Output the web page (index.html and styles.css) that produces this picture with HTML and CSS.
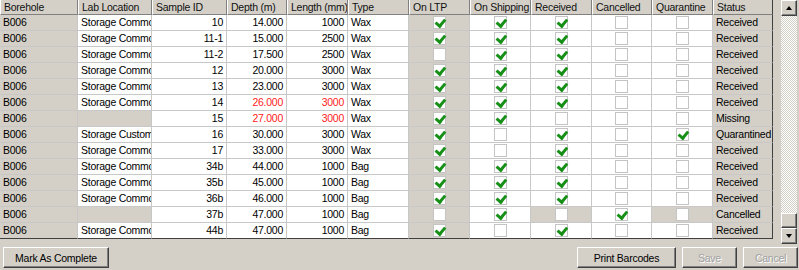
FILE: index.html
```html
<!DOCTYPE html>
<html>
    <head>
        <link rel="stylesheet" href="styles.css">
    </head>
    <body>
        <div class="window">
            <div class="main">
                <div class="grid">
                    <div class="row head">
                        <div class="cell">Borehole</div>
                        <div class="cell">Lab Location</div>
                        <div class="cell">Sample ID</div>
                        <div class="cell">Depth (m)</div>
                        <div class="cell">Length (mm)</div>
                        <div class="cell">Type</div>
                        <div class="cell">On LTP</div>
                        <div class="cell">On Shipping</div>
                        <div class="cell">Received</div>
                        <div class="cell">Cancelled</div>
                        <div class="cell">Quarantine</div>
                        <div class="cell">Status</div>
                    </div>
                    <div class="row">
                        <div class="cell">B006</div>
                        <div class="cell">Storage Common</div>
                        <div class="cell">10</div>
                        <div class="cell">14.000</div>
                        <div class="cell">1000</div>
                        <div class="cell">Wax</div>
                        <div class="cell chk"><span class="cb on"></span></div>
                        <div class="cell chk"><span class="cb on"></span></div>
                        <div class="cell chk"><span class="cb on"></span></div>
                        <div class="cell chk"><span class="cb"></span></div>
                        <div class="cell chk"><span class="cb"></span></div>
                        <div class="cell">Received</div>
                    </div>
                    <div class="row">
                        <div class="cell">B006</div>
                        <div class="cell">Storage Common</div>
                        <div class="cell">11-1</div>
                        <div class="cell">15.000</div>
                        <div class="cell">2500</div>
                        <div class="cell">Wax</div>
                        <div class="cell chk"><span class="cb on"></span></div>
                        <div class="cell chk"><span class="cb on"></span></div>
                        <div class="cell chk"><span class="cb on"></span></div>
                        <div class="cell chk"><span class="cb"></span></div>
                        <div class="cell chk"><span class="cb"></span></div>
                        <div class="cell">Received</div>
                    </div>
                    <div class="row">
                        <div class="cell">B006</div>
                        <div class="cell">Storage Common</div>
                        <div class="cell">11-2</div>
                        <div class="cell">17.500</div>
                        <div class="cell">2500</div>
                        <div class="cell">Wax</div>
                        <div class="cell chk"><span class="cb"></span></div>
                        <div class="cell chk"><span class="cb on"></span></div>
                        <div class="cell chk"><span class="cb on"></span></div>
                        <div class="cell chk"><span class="cb"></span></div>
                        <div class="cell chk"><span class="cb"></span></div>
                        <div class="cell">Received</div>
                    </div>
                    <div class="row">
                        <div class="cell">B006</div>
                        <div class="cell">Storage Common</div>
                        <div class="cell">12</div>
                        <div class="cell">20.000</div>
                        <div class="cell">3000</div>
                        <div class="cell">Wax</div>
                        <div class="cell chk"><span class="cb on"></span></div>
                        <div class="cell chk"><span class="cb on"></span></div>
                        <div class="cell chk"><span class="cb on"></span></div>
                        <div class="cell chk"><span class="cb"></span></div>
                        <div class="cell chk"><span class="cb"></span></div>
                        <div class="cell">Received</div>
                    </div>
                    <div class="row">
                        <div class="cell">B006</div>
                        <div class="cell">Storage Common</div>
                        <div class="cell">13</div>
                        <div class="cell">23.000</div>
                        <div class="cell">3000</div>
                        <div class="cell">Wax</div>
                        <div class="cell chk"><span class="cb on"></span></div>
                        <div class="cell chk"><span class="cb on"></span></div>
                        <div class="cell chk"><span class="cb on"></span></div>
                        <div class="cell chk"><span class="cb"></span></div>
                        <div class="cell chk"><span class="cb"></span></div>
                        <div class="cell">Received</div>
                    </div>
                    <div class="row">
                        <div class="cell">B006</div>
                        <div class="cell">Storage Common</div>
                        <div class="cell">14</div>
                        <div class="cell red">26.000</div>
                        <div class="cell red">3000</div>
                        <div class="cell">Wax</div>
                        <div class="cell chk"><span class="cb on"></span></div>
                        <div class="cell chk"><span class="cb on"></span></div>
                        <div class="cell chk"><span class="cb on"></span></div>
                        <div class="cell chk"><span class="cb"></span></div>
                        <div class="cell chk"><span class="cb"></span></div>
                        <div class="cell">Received</div>
                    </div>
                    <div class="row">
                        <div class="cell">B006</div>
                        <div class="cell grey"></div>
                        <div class="cell">15</div>
                        <div class="cell red">27.000</div>
                        <div class="cell red">3000</div>
                        <div class="cell">Wax</div>
                        <div class="cell chk"><span class="cb on"></span></div>
                        <div class="cell chk"><span class="cb on"></span></div>
                        <div class="cell chk"><span class="cb"></span></div>
                        <div class="cell chk"><span class="cb"></span></div>
                        <div class="cell chk"><span class="cb"></span></div>
                        <div class="cell">Missing</div>
                    </div>
                    <div class="row">
                        <div class="cell">B006</div>
                        <div class="cell">Storage Custom</div>
                        <div class="cell">16</div>
                        <div class="cell">30.000</div>
                        <div class="cell">3000</div>
                        <div class="cell">Wax</div>
                        <div class="cell chk"><span class="cb on"></span></div>
                        <div class="cell chk"><span class="cb"></span></div>
                        <div class="cell chk"><span class="cb on"></span></div>
                        <div class="cell chk"><span class="cb"></span></div>
                        <div class="cell chk"><span class="cb on"></span></div>
                        <div class="cell">Quarantined</div>
                    </div>
                    <div class="row">
                        <div class="cell">B006</div>
                        <div class="cell">Storage Common</div>
                        <div class="cell">17</div>
                        <div class="cell">33.000</div>
                        <div class="cell">3000</div>
                        <div class="cell">Wax</div>
                        <div class="cell chk"><span class="cb on"></span></div>
                        <div class="cell chk"><span class="cb"></span></div>
                        <div class="cell chk"><span class="cb on"></span></div>
                        <div class="cell chk"><span class="cb"></span></div>
                        <div class="cell chk"><span class="cb"></span></div>
                        <div class="cell">Received</div>
                    </div>
                    <div class="row">
                        <div class="cell">B006</div>
                        <div class="cell">Storage Common</div>
                        <div class="cell">34b</div>
                        <div class="cell">44.000</div>
                        <div class="cell">1000</div>
                        <div class="cell">Bag</div>
                        <div class="cell chk"><span class="cb on"></span></div>
                        <div class="cell chk"><span class="cb on"></span></div>
                        <div class="cell chk"><span class="cb on"></span></div>
                        <div class="cell chk"><span class="cb"></span></div>
                        <div class="cell chk"><span class="cb"></span></div>
                        <div class="cell">Received</div>
                    </div>
                    <div class="row">
                        <div class="cell">B006</div>
                        <div class="cell">Storage Common</div>
                        <div class="cell">35b</div>
                        <div class="cell">45.000</div>
                        <div class="cell">1000</div>
                        <div class="cell">Bag</div>
                        <div class="cell chk"><span class="cb on"></span></div>
                        <div class="cell chk"><span class="cb on"></span></div>
                        <div class="cell chk"><span class="cb on"></span></div>
                        <div class="cell chk"><span class="cb"></span></div>
                        <div class="cell chk"><span class="cb"></span></div>
                        <div class="cell">Received</div>
                    </div>
                    <div class="row">
                        <div class="cell">B006</div>
                        <div class="cell">Storage Common</div>
                        <div class="cell">36b</div>
                        <div class="cell">46.000</div>
                        <div class="cell">1000</div>
                        <div class="cell">Bag</div>
                        <div class="cell chk"><span class="cb on"></span></div>
                        <div class="cell chk"><span class="cb on"></span></div>
                        <div class="cell chk"><span class="cb on"></span></div>
                        <div class="cell chk"><span class="cb"></span></div>
                        <div class="cell chk"><span class="cb"></span></div>
                        <div class="cell">Received</div>
                    </div>
                    <div class="row">
                        <div class="cell">B006</div>
                        <div class="cell grey"></div>
                        <div class="cell">37b</div>
                        <div class="cell">47.000</div>
                        <div class="cell">1000</div>
                        <div class="cell">Bag</div>
                        <div class="cell chk"><span class="cb"></span></div>
                        <div class="cell chk"><span class="cb on"></span></div>
                        <div class="cell chk grey"><span class="cb"></span></div>
                        <div class="cell chk"><span class="cb on"></span></div>
                        <div class="cell chk grey"><span class="cb"></span></div>
                        <div class="cell">Cancelled</div>
                    </div>
                    <div class="row">
                        <div class="cell">B006</div>
                        <div class="cell">Storage Common</div>
                        <div class="cell">44b</div>
                        <div class="cell">47.000</div>
                        <div class="cell">1000</div>
                        <div class="cell">Bag</div>
                        <div class="cell chk"><span class="cb on"></span></div>
                        <div class="cell chk"><span class="cb"></span></div>
                        <div class="cell chk"><span class="cb on"></span></div>
                        <div class="cell chk"><span class="cb"></span></div>
                        <div class="cell chk"><span class="cb"></span></div>
                        <div class="cell">Received</div>
                    </div>
                </div>
                <div class="scrollbar">
                    <div class="sb-btn"><span class="arrow up"></span></div>
                    <div class="sb-track"></div>
                    <div class="sb-btn thumb"></div>
                    <div class="sb-btn"><span class="arrow down"></span></div>
                </div>
            </div>
            <div class="actions">
                <button class="btn wide">Mark As Complete</button>
                <div class="actions-right">
                    <button class="btn print">Print Barcodes</button>
                    <button class="btn small" disabled>Save</button>
                    <button class="btn small" disabled>Cancel</button>
                </div>
            </div>
        </div>
    </body>
</html>
```

FILE: styles.css
```css
body {
    margin: 0;
    background-color: #d4d0c8;
    font-family: "Liberation Sans", Arial, sans-serif;
    font-size: 10.5px;
    letter-spacing: -0.25px;
    color: #000;
}
.window {
    width: 799px;
    height: 270px;
}
.main {
    display: flex;
    height: 244px;
}
.grid {
    width: 773px;
}
.row {
    display: grid;
    grid-template-columns: 78px 74px 75px 60px 61px 61px 61px 61px 61px 60px 61px 60px;
    height: 16px;
}
.cell {
    box-sizing: border-box;
    border-right: 1px solid #c8c8c8;
    border-bottom: 1px solid #c8c8c8;
    padding: 0 3px;
    line-height: 15px;
    white-space: nowrap;
    overflow: hidden;
    background-color: #fff;
}
.row .cell:nth-child(1),
.row .cell:nth-child(7),
.row .cell:nth-child(12),
.row .cell.grey {
    background-color: #d4d0c8;
}
.row .cell:nth-child(3),
.row .cell:nth-child(4),
.row .cell:nth-child(5) {
    text-align: right;
}
.row .cell:last-child {
    border-right-color: #404040;
}
.row:last-child .cell {
    border-bottom-color: #404040;
}
.head {
    height: 15px;
}
.head .cell {
    background-color: #d4d0c8;
    border-left: 1px solid #fff;
    border-right-color: #808080;
    border-bottom-color: #808080;
    line-height: 14px;
    color: #111;
    text-align: left !important;
}
.cell.red {
    color: #f22;
}
.cell.chk {
    display: flex;
    align-items: center;
    justify-content: center;
    padding: 0;
}
.cb {
    position: relative;
    width: 13px;
    height: 13px;
    box-sizing: border-box;
    border: 1px solid #c4c4c4;
    background-color: #fff;
}
.cb.on::after {
    content: "";
    position: absolute;
    left: 3px;
    top: -0.5px;
    width: 3.5px;
    height: 7px;
    border: solid #168f16;
    border-width: 0 3px 3px 0;
    transform: rotate(40deg);
}

.scrollbar {
    display: flex;
    flex-direction: column;
    width: 16px;
    height: 244px;
    margin-left: 8px;
}
.sb-track {
    flex: 1;
    background: repeating-conic-gradient(#d4d0c8 0 25%, #fff 0 50%) 0 0 / 2px 2px;
}
.sb-btn {
    box-sizing: border-box;
    height: 16px;
    background-color: #d4d0c8;
    border: 1px solid;
    border-color: #fff #404040 #404040 #fff;
    box-shadow: inset -1px -1px #808080;
    display: flex;
    align-items: center;
    justify-content: center;
}
.sb-btn.thumb {
    height: 15px;
}
.arrow {
    width: 0;
    height: 0;
    border-left: 3.5px solid transparent;
    border-right: 3.5px solid transparent;
}
.arrow.up {
    border-bottom: 4px solid #000;
}
.arrow.down {
    border-top: 4px solid #000;
}

.actions {
    display: flex;
    justify-content: space-between;
    margin-top: 3px;
    padding: 0 1px 0 3px;
}
.actions-right {
    display: flex;
    gap: 6px;
}
.btn {
    box-sizing: border-box;
    height: 21px;
    padding: 0;
    font-family: "Liberation Sans", Arial, sans-serif;
    font-size: 10.5px;
    letter-spacing: -0.25px;
    color: #000;
    background-color: #d4d0c8;
    border: 1px solid;
    border-color: #fff #404040 #404040 #fff;
    box-shadow: inset -1px -1px #808080;
}
.btn.wide {
    width: 106px;
}
.btn.print {
    width: 99px;
}
.btn.small {
    width: 55px;
}
.btn:disabled {
    color: #a0a0a0;
    text-shadow: 1px 1px #fff;
}
```
